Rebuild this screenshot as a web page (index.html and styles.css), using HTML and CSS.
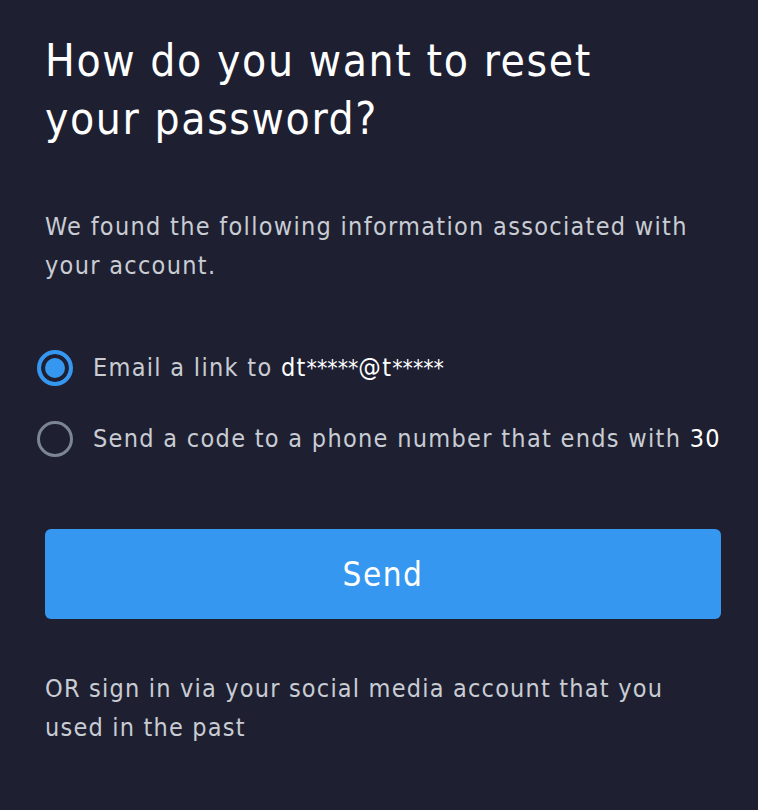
FILE: index.html
```html
<!DOCTYPE html>
<html lang="en">
<head>
    <meta charset="UTF-8">
    <meta name="viewport" content="width=device-width, initial-scale=1.0">
    <title>Reset password</title>
    <link rel="stylesheet" href="styles.css">
</head>
<body>
    <div class="reset">
        <h1>How do you want to reset your password?</h1>
        <p class="intro">We found the following information associated with your account.</p>

        <form class="options">
            <label class="option">
                <input type="radio" name="method" value="email" checked>
                <span class="dot"></span>
                <span>Email a link to <b>dt<span class="stars">*****</span>@t<span class="stars">*****</span></b></span>
            </label>
            <label class="option">
                <input type="radio" name="method" value="phone">
                <span class="dot"></span>
                <span>Send a code to a phone number that ends with <b>30</b></span>
            </label>
            <button type="button" class="send">Send</button>
        </form>

        <p class="social">OR sign in via your social media account that you used in the past</p>
    </div>
</body>
</html>
```

FILE: styles.css
```css
body {
    font-family: "DejaVu Sans Condensed", "DejaVu Sans", sans-serif;
    background-color: #1e2032;
    color: #c9ccd3;
    margin: 0;
}

.reset {
    padding: 32px 37px 40px 45px;
}

h1 {
    font-size: 44px;
    font-weight: normal;
    line-height: 58px;
    letter-spacing: 1.6px;
    color: #fff;
    margin: 0 0 59px;
    max-width: 600px;
}

.intro {
    font-size: 25px;
    line-height: 39px;
    letter-spacing: 1.3px;
    margin: 0 0 47px;
}

.options {
    display: flex;
    flex-direction: column;
}

.option {
    display: flex;
    align-items: center;
    gap: 20px;
    margin-left: -8px;
    font-size: 25px;
    letter-spacing: 1.3px;
    height: 71px;
    cursor: pointer;
}

.option b {
    font-weight: normal;
    color: #fff;
}

.option .stars {
    font-size: 23px;
    letter-spacing: 0;
}

.option input {
    display: none;
}

.dot {
    width: 30px;
    height: 30px;
    border: 3px solid #7b8594;
    border-radius: 50%;
    box-sizing: content-box;
    flex-shrink: 0;
}

.option input:checked + .dot {
    width: 28px;
    height: 28px;
    border: 4px solid #3597f0;
    background-color: #3597f0;
    box-shadow: inset 0 0 0 4px #1e2032;
}

.send {
    margin-top: 55px;
    height: 90px;
    background-color: #3597f0;
    color: #fff;
    border: none;
    border-radius: 6px;
    font-family: inherit;
    font-size: 33px;
    letter-spacing: 1.5px;
    cursor: pointer;
}

.social {
    font-size: 25px;
    line-height: 39px;
    letter-spacing: 1.2px;
    margin: 50px 0 0;
}
```
